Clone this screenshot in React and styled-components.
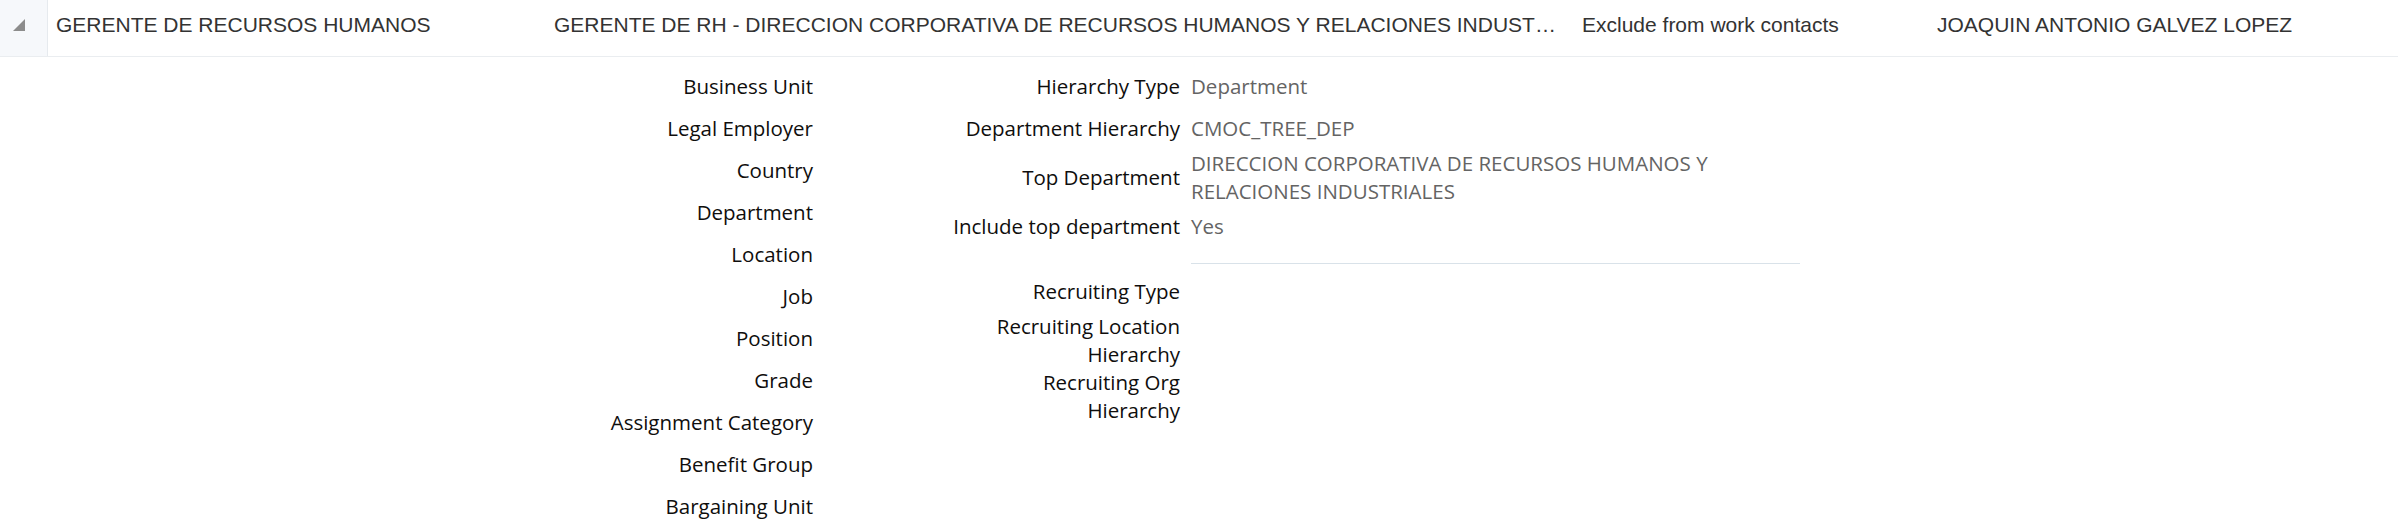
import React from "react";
import styled, { createGlobalStyle } from "styled-components";

const GlobalStyle = createGlobalStyle`
  body {
    margin: 0;
    background: #fff;
  }
`;

const Page = styled.div`
  width: 2398px;
  font-family: "Open Sans", "Noto Sans", sans-serif;
`;

const HeaderRow = styled.div`
  display: flex;
  height: 56px;
  border-bottom: 1px solid #eaedf0;
  font-family: "Liberation Sans", Arial, sans-serif;
  font-size: 21px;
  color: #333;
`;

const ToggleCell = styled.div`
  width: 48px;
  flex: none;
  box-sizing: border-box;
  background: #f6f8fb;
  border-right: 1px solid #e6eaee;
  display: flex;
  align-items: center;
  padding: 0 0 6px 13px;
`;

const Cell = styled.div`
  flex: ${(p) => (p.$width ? "none" : "1")};
  width: ${(p) => (p.$width ? `${p.$width}px` : "auto")};
  box-sizing: border-box;
  padding: 0 12px 7px 8px;
  display: flex;
  align-items: center;
  min-width: 0;
`;

const CellText = styled.span`
  white-space: nowrap;
  overflow: hidden;
  text-overflow: ellipsis;
`;

const Body = styled.div`
  display: flex;
  padding-top: 8px;
  font-size: 20.5px;
  line-height: 28px;
`;

const LeftForm = styled.div`
  width: 813px;
  display: flex;
  flex-direction: column;
`;

const RightForm = styled.div`
  margin-left: 136px;
  display: grid;
  grid-template-columns: 231px 609px;
  column-gap: 11px;
  align-content: start;
`;

const Label = styled.div`
  min-height: 42px;
  display: flex;
  align-items: center;
  justify-content: flex-end;
  text-align: right;
  color: #0f0e0d;
`;

const Value = styled.div`
  min-height: 42px;
  display: flex;
  align-items: center;
  color: #646464;
`;

const Divider = styled.div`
  grid-column: 2;
  height: 1px;
  background: #d9e2e9;
  margin: 16px 0 6px;
`;

const Disclosure = () => (
  <svg width="12" height="12" viewBox="0 0 12 12">
    <polygon points="12,0 12,12 0,12" fill="#8c8c8c" />
  </svg>
);

const leftLabels = [
  "Business Unit",
  "Legal Employer",
  "Country",
  "Department",
  "Location",
  "Job",
  "Position",
  "Grade",
  "Assignment Category",
  "Benefit Group",
  "Bargaining Unit",
];

const hierarchy = [
  ["Hierarchy Type", "Department"],
  ["Department Hierarchy", "CMOC_TREE_DEP"],
  ["Top Department", "DIRECCION CORPORATIVA DE RECURSOS HUMANOS Y RELACIONES INDUSTRIALES"],
  ["Include top department", "Yes"],
];

const recruiting = ["Recruiting Type", "Recruiting Location Hierarchy", "Recruiting Org Hierarchy"];

const App = () => {
  return (
    <>
      <GlobalStyle />
      <Page>
        <HeaderRow>
          <ToggleCell>
            <Disclosure />
          </ToggleCell>
          <Cell $width={498}>
            <CellText>GERENTE DE RECURSOS HUMANOS</CellText>
          </Cell>
          <Cell $width={1028}>
            <CellText>
              GERENTE DE RH - DIRECCION CORPORATIVA DE RECURSOS HUMANOS Y RELACIONES INDUSTRIALES
            </CellText>
          </Cell>
          <Cell $width={355}>
            <CellText>Exclude from work contacts</CellText>
          </Cell>
          <Cell>
            <CellText>JOAQUIN ANTONIO GALVEZ LOPEZ</CellText>
          </Cell>
        </HeaderRow>
        <Body>
          <LeftForm>
            {leftLabels.map((l) => (
              <Label key={l}>{l}</Label>
            ))}
          </LeftForm>
          <RightForm>
            {hierarchy.map(([l, v]) => (
              <React.Fragment key={l}>
                <Label>{l}</Label>
                <Value>{v}</Value>
              </React.Fragment>
            ))}
            <Divider />
            {recruiting.map((l) => (
              <React.Fragment key={l}>
                <Label>{l}</Label>
                <Value />
              </React.Fragment>
            ))}
          </RightForm>
        </Body>
      </Page>
    </>
  );
};

export default App;
